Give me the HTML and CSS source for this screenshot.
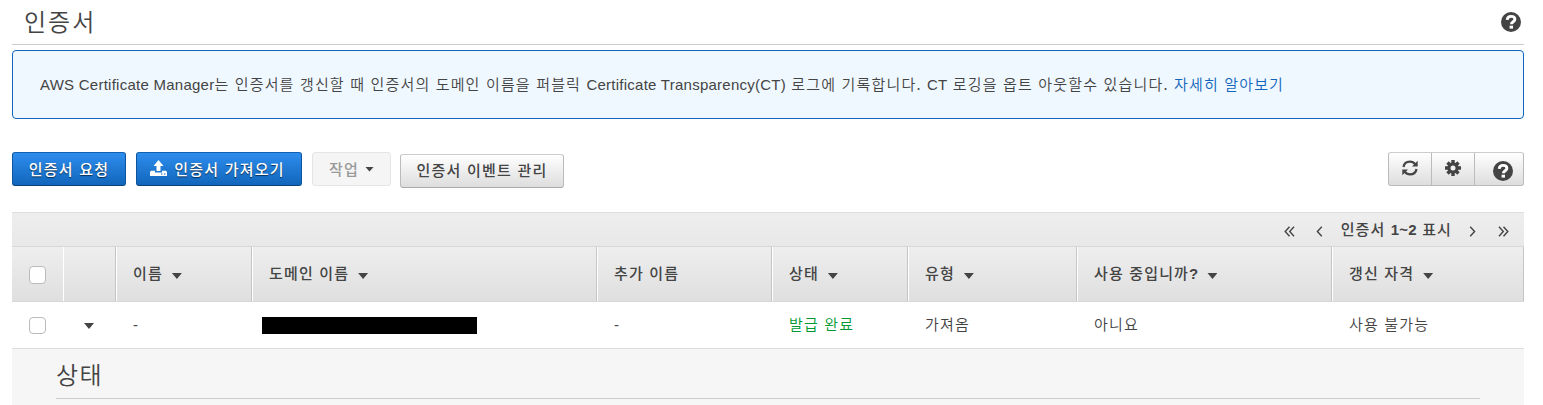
FILE: index.html
```html
<!DOCTYPE html>
<html lang="ko">
<head>
<meta charset="utf-8">
<title>인증서</title>
<link rel="stylesheet" href="styles.css">
</head>
<body>
<svg class="defs" width="0" height="0">
  <symbol id="help" viewBox="0 0 20 20"><circle cx="10" cy="10" r="10" fill="#444"/><path d="M6.200 7.800C6.400 5.300 8 4.400 10 4.400c2.300 0 3.900 1 3.900 2.900 0 2.500-3.500 2.300-3.500 5" fill="none" stroke="#fff" stroke-width="2.900"/><rect x="8.600" y="13.700" width="3.400" height="2.900" fill="#fff"/></symbol>
</svg>
<main class="page">
  <header class="title-bar"><h1 class="title">인증서</h1><svg class="help"><use href="#help"/></svg></header>
  <section class="notice"><p class="notice-text"><span class="en">AWS Certificate Manager</span>는 인증서를 갱신할 때 인증서의 도메인 이름을 퍼블릭 <span class="en">Certificate Transparency(CT)</span> 로그에 기록합니다. <span class="en">CT</span> 로깅을 옵트 아웃할수 있습니다. <a class="link">자세히 알아보기</a></p></section>
  <div class="toolbar">
    <button class="btn primary request">인증서 요청</button>
    <button class="btn primary import"><svg class="upload" viewBox="0 0 17 17"><path d="M8.500 0 13.500 6H10.500V11H6.500V6H3.500ZM1 10.800H5V12.500H12V10.800H16L17 12V16H0V12Z" fill="#fff"/><path d="M11 14h1.500M14 14h1.500" stroke="#1c6bc4"/></svg>인증서 가져오기</button>
    <button class="btn disabled">작업<i class="caret small"></i></button>
    <button class="btn plain events">인증서 이벤트 관리</button>
    <div class="tools">
      <button class="tool"><svg width="16" height="16" viewBox="0 0 16 16"><path d="M1.500 7C2 3.800 4.600 1.600 8 1.600c2.300 0 4 1 5.200 2.800M14.500 9C14 12.200 11.400 14.400 8 14.400c-2.300 0-4-1-5.200-2.800" fill="none" stroke="#444" stroke-width="2.200"/><path d="M15.700.8V6.500H10ZM.3 15.200V9.500H6Z" fill="#444"/></svg></button>
      <button class="tool"><svg width="16" height="16" viewBox="0 0 16 16"><g stroke="#444" stroke-width="3.400"><path d="M8 0V16M0 8H16M2.500 2.500 13.500 13.500M13.500 2.500 2.500 13.500"/></g><circle cx="8" cy="8" r="5.700" fill="#444"/><circle cx="8" cy="8" r="2.500" fill="#f1f1f1"/></svg></button>
      <button class="tool tool-help"><svg class="help"><use href="#help"/></svg></button>
    </div>
  </div>
  <section class="table">
    <div class="pager">
      <svg width="11" height="11" viewBox="0 0 11 11"><path d="M5.500.7 1.200 5.500l4.300 4.800M10 .7 5.700 5.500l4.300 4.800"/></svg>
      <svg class="prev" width="7" height="11" viewBox="0 0 7 11"><path d="M5.800.7 1.400 5.500l4.400 4.800"/></svg>
      <span class="range">인증서 <b class="en">1~2</b> 표시</span>
      <svg class="next" width="7" height="11" viewBox="0 0 7 11"><path d="m1.200.7 4.400 4.800-4.400 4.800"/></svg>
      <svg class="last" width="11" height="11" viewBox="0 0 11 11"><path d="m1 .7 4.300 4.800L1 10.300M5.500.7l4.300 4.800-4.300 4.800"/></svg>
    </div>
    <div class="row head">
      <div class="cell check"><i class="box"></i></div>
      <div class="cell"></div>
      <div class="cell">이름<i class="caret"></i></div>
      <div class="cell">도메인 이름<i class="caret"></i></div>
      <div class="cell">추가 이름</div>
      <div class="cell">상태<i class="caret"></i></div>
      <div class="cell">유형<i class="caret"></i></div>
      <div class="cell">사용 중입니까<b class="en">?</b><i class="caret"></i></div>
      <div class="cell">갱신 자격<i class="caret"></i></div>
    </div>
    <div class="row data">
      <div class="cell check"><i class="box"></i></div>
      <div class="cell expand"><i class="caret"></i></div>
      <div class="cell"><span class="en">-</span></div>
      <div class="cell domain"><i class="redacted"></i></div>
      <div class="cell"><span class="en">-</span></div>
      <div class="cell issued">발급 완료</div>
      <div class="cell">가져옴</div>
      <div class="cell">아니요</div>
      <div class="cell">사용 불가능</div>
    </div>
    <div class="detail"><h2 class="detail-title">상태</h2></div>
  </section>
</main>
</body>
</html>
```
FILE: styles.css
```css
* { box-sizing: border-box; }
body { margin: 0; background: #fff; color: #444; font: 400 15px/20px "Noto Sans CJK KR DemiLight", "Noto Sans CJK KR", sans-serif; letter-spacing: 1.150px; }
.defs { display: block; }
.page { width: 1512px; margin-left: 12px; }
.en { font-family: "Liberation Sans", sans-serif; letter-spacing: .25px; }
.title-bar { height: 45px; border-bottom: 1px solid #ccc; display: flex; justify-content: space-between; padding: 12px 3px 0 12px; }
.title { margin: -6px 0 0; font-size: 24px; line-height: 30px; font-weight: 400; letter-spacing: 2px; }
.help { width: 20px; height: 20px; flex: none; }
.notice { height: 69px; margin-top: 5px; border: 1px solid #1166bb; border-radius: 4px; background: #f0f8ff; padding: 23px 27px; }
.notice-text { margin: 0; white-space: nowrap; letter-spacing: 1.160px; }
.link { color: #1166bb; }
.toolbar { display: flex; margin-top: 33px; height: 34px; }
.btn { height: 34px; padding: 0 0 1px; border: 1px solid #bbb; border-radius: 3px; display: flex; align-items: center; justify-content: center; font: 500 15px/20px "Noto Sans CJK KR", sans-serif; letter-spacing: 1.200px; color: #444; white-space: nowrap; }
.primary { color: #fff; border-color: #1260b0 #0f559d #0a4078; background: linear-gradient(#2e8ded, #1166bb); text-shadow: 0 1px 1px rgba(0,0,0,.6); }
.request { width: 114px; }
.import { width: 166px; margin-left: 10px; padding-right: 3px; }
.upload { width: 17px; height: 17px; margin: -1px 7px 0 0; }
.disabled { width: 79px; margin-left: 10px; color: #999; background: #f5f5f5; border-color: #e5e5e5; }
.plain { background: linear-gradient(#fff, #ddd); border-color: #ccc #bbb #aaa; }
.events { width: 164px; margin: 2px 0 0 9px; padding-bottom: 2px; }
.tools { display: flex; width: 136px; height: 34px; margin-left: auto; border: 1px solid #bbb; border-top-color: #ccc; border-radius: 3px; background: linear-gradient(#fff, #ddd); }
.tool { width: 43px; padding: 0 0 2px; border: 0; border-right: 1px solid #bbb; background: none; display: flex; align-items: center; justify-content: center; }
.tool-help { width: 48px; border: 0; padding: 4px 0 0 8px; }
.caret { display: inline-block; width: 10px; height: 6px; margin-left: 9px; background: #444; clip-path: polygon(0 0, 100% 0, 50% 100%); vertical-align: 0; }
.btn .small { width: 9px; height: 5px; margin: 1px 0 0 6px; }
.table { margin-top: 26px; border-top: 1px solid #ddd; }
.pager { height: 34px; background: linear-gradient(#eee, #e8e8e8); border-bottom: 1px solid #d8d8d8; display: flex; justify-content: flex-end; padding: 13px 15px 0 0; }
.pager svg { fill: none; stroke: #444; stroke-width: 1.400; }
.pager .prev { margin-left: 21px; }
.range { margin: -7px 17px 0 18px; font-family: "Noto Sans CJK KR", sans-serif; font-weight: 500; white-space: nowrap; letter-spacing: 1.100px; }
.pager .last { margin-left: 22px; }
.row { display: grid; grid-template-columns: 52px 52px 136px 345px 175px 136px 169px 255px 192px; }
.cell { padding-left: 17px; white-space: nowrap; }
.head { height: 55px; background: linear-gradient(#eee, #dfdfdf); border-bottom: 1px solid #d8d8d8; font-family: "Noto Sans CJK KR", sans-serif; font-weight: 500; }
.head .cell { padding-top: 16px; border-right: 1px solid #c5c5c5; border-left: 1px solid #fff; padding-left: 16px; }
.head .check { border-left: 0; border-right: 0; padding-left: 17px; }
.head .check + .cell { margin-left: -1px; }
.box { display: block; width: 17px; height: 17px; border: 1px solid #bbb; border-radius: 4px; background: #fff; }
.head .box { margin-top: 3px; height: 18px; }
.data { height: 46px; }
.data .cell { padding-top: 12px; }
.data .box { margin-top: 3px; }
.data .expand { padding: 11px 0 0 11px; }
.data .domain { padding: 15px 0 0 10px; }
.redacted { display: block; width: 215px; height: 17px; background: #000; }
.data .issued { color: #093; }
.detail { height: 57px; background: #f6f6f6; border-top: 1px solid #ddd; padding: 10px 44px 0; }
.detail-title { margin: 0; height: 40px; border-bottom: 1px solid #ccc; font-size: 24px; line-height: 29px; font-weight: 400; letter-spacing: 1.500px; }
```
